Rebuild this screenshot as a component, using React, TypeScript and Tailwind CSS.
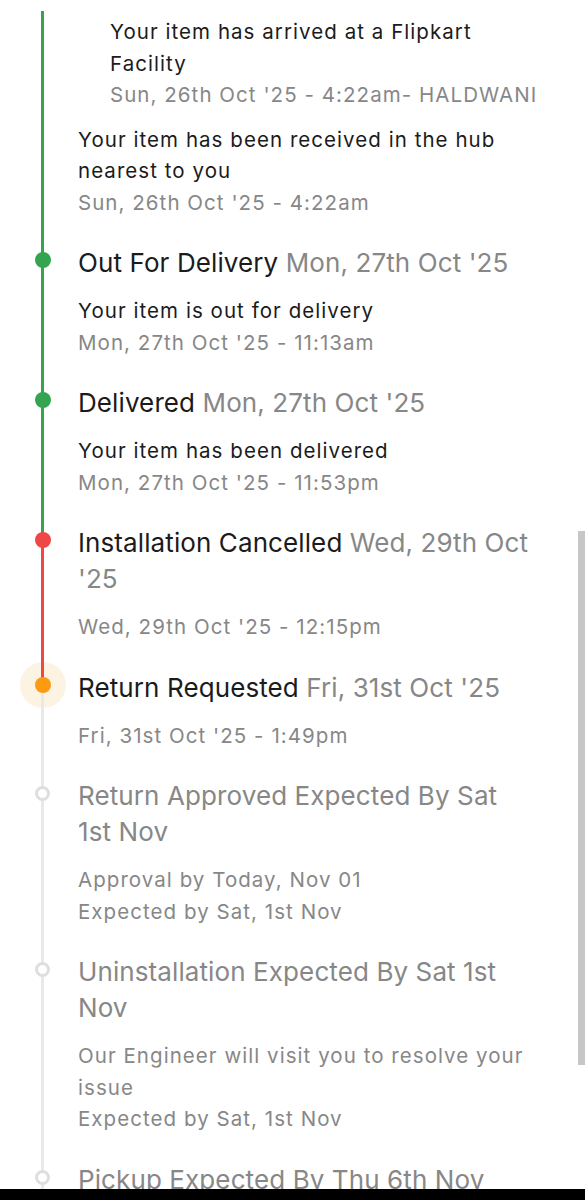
import React from "react";

const GREEN = "bg-[#34a44f]";
const RED = "bg-[#ef4646]";
const GRAY = "bg-[#e9e9e9]";

type Dot = "green" | "red" | "orange" | "hollow";

function Marker({ kind }: { kind: Dot }) {
  if (kind === "hollow") {
    return (
      <div className="absolute left-[35px] top-[8px] z-20 h-[15px] w-[15px] rounded-full border-[3px] border-[#dedede] bg-white" />
    );
  }
  const fill =
    kind === "green" ? "bg-[#34a44f]" : kind === "red" ? "bg-[#ef4646]" : "bg-[#fb9b12]";
  return (
    <>
      {kind === "orange" && (
        <div className="absolute left-[19.5px] top-[-8px] h-[46px] w-[46px] rounded-full bg-[#fdf3e3]" />
      )}
      <div className={`absolute left-[34.5px] top-[7px] z-20 h-4 w-4 rounded-full ${fill}`} />
    </>
  );
}

function Step({
  dot,
  above,
  below,
  title,
  date,
  muted,
  children,
}: {
  dot: Dot;
  above: string;
  below: string;
  title: string;
  date?: string;
  muted?: boolean;
  children?: React.ReactNode;
}) {
  return (
    <div className="flex">
      <div className="relative w-[78px] shrink-0">
        <div className={`absolute left-[41px] top-0 z-10 h-[15px] w-[3px] ${above}`} />
        <div className={`absolute left-[41px] top-[15px] bottom-0 z-10 w-[3px] ${below}`} />
        <Marker kind={dot} />
      </div>
      <div className="w-[462px] pb-[27px]">
        <div
          className={`max-w-[455px] text-[26px] leading-[36px] tracking-[0.1px] ${muted ? "text-[#878787]" : "text-[#1b1b1b]"}`}
        >
          {title}
          {date && <span className="text-[#878787]"> {date}</span>}
        </div>
        <div className="mt-[14px] flex flex-col gap-[13px]">{children}</div>
      </div>
    </div>
  );
}

function Event({ text, sub, muted }: { text?: string; sub: string[]; muted?: boolean }) {
  return (
    <div className="text-[20.5px] leading-[31.5px] tracking-[1.05px]">
      {text && <div className={muted ? "text-[#878787]" : "text-[#1b1b1b]"}>{text}</div>}
      {sub.map((s) => (
        <div key={s} className="text-[#878787]">
          {s}
        </div>
      ))}
    </div>
  );
}

export default function App() {
  return (
    <div className="relative flex h-[1200px] w-[585px] flex-col overflow-hidden bg-white font-['Inter',sans-serif]">
      <div className="flex-1 overflow-hidden">
        <div className="flex">
          <div className="relative w-[78px] shrink-0">
            <div className={`absolute left-[41px] top-[11px] bottom-0 w-[3px] ${GREEN}`} />
          </div>
          <div className="flex w-[462px] flex-col gap-[13px] pt-[16px] pb-[27px]">
            <div className="pl-8">
              <Event
                text="Your item has arrived at a Flipkart Facility"
                sub={["Sun, 26th Oct '25 - 4:22am- HALDWANI"]}
              />
            </div>
            <Event
              text="Your item has been received in the hub nearest to you"
              sub={["Sun, 26th Oct '25 - 4:22am"]}
            />
          </div>
        </div>

        <Step dot="green" above={GREEN} below={GREEN} title="Out For Delivery" date="Mon, 27th Oct '25">
          <Event text="Your item is out for delivery" sub={["Mon, 27th Oct '25 - 11:13am"]} />
        </Step>

        <Step dot="green" above={GREEN} below={GREEN} title="Delivered" date="Mon, 27th Oct '25">
          <Event text="Your item has been delivered" sub={["Mon, 27th Oct '25 - 11:53pm"]} />
        </Step>

        <Step dot="red" above={GREEN} below={RED} title="Installation Cancelled" date="Wed, 29th Oct '25">
          <Event sub={["Wed, 29th Oct '25 - 12:15pm"]} />
        </Step>

        <Step dot="orange" above={RED} below={GRAY} title="Return Requested" date="Fri, 31st Oct '25">
          <Event sub={["Fri, 31st Oct '25 - 1:49pm"]} />
        </Step>

        <Step dot="hollow" above={GRAY} below={GRAY} muted title="Return Approved Expected By Sat 1st Nov">
          <Event sub={["Approval by Today, Nov 01", "Expected by Sat, 1st Nov"]} />
        </Step>

        <Step dot="hollow" above={GRAY} below={GRAY} muted title="Uninstallation Expected By Sat 1st Nov">
          <Event
            muted
            text="Our Engineer will visit you to resolve your issue"
            sub={["Expected by Sat, 1st Nov"]}
          />
        </Step>

        <Step dot="hollow" above={GRAY} below={GRAY} muted title="Pickup Expected By Thu 6th Nov">
          <Event sub={["Expected by Thu, 6th Nov"]} />
        </Step>
      </div>

      {/* scrollbar thumb */}
      <div className="absolute right-0 top-[531px] h-[534px] w-[7px] bg-[#c7c7c7]" />

      <div className="h-[11px] shrink-0 bg-black" />
    </div>
  );
}
